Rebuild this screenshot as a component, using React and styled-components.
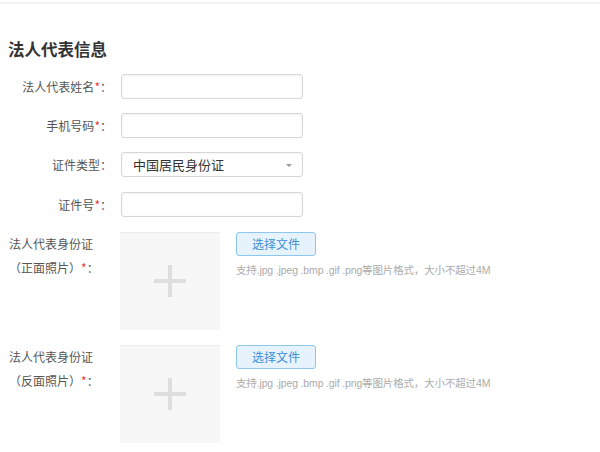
import React from "react";
import styled, { createGlobalStyle } from "styled-components";

const Global = createGlobalStyle`
  html, body { margin: 0; padding: 0; background: #fff; }
  body { font-family: "Microsoft YaHei", "Noto Sans CJK SC", "Liberation Sans", sans-serif; }
  * { box-sizing: border-box; }
`;

const Page = styled.div`
  width: 600px;
  height: 452px;
  overflow: hidden;
  background: #fff;
`;

const TopRule = styled.div`
  margin-top: 2px;
  height: 2px;
  background: #f1f1f1;
`;

const Body = styled.div`
  padding: 0 0 0 9px;
`;

const Title = styled.h2`
  margin: 34px 0 0 -1px;
  font-size: 16.5px;
  line-height: 22px;
  font-weight: bold;
  color: #333;
`;

const Fields = styled.div`
  display: flex;
  flex-direction: column;
  gap: 14.2px;
  margin-top: 14px;
`;

const Row = styled.div`
  display: flex;
  align-items: center;
  height: 25px;
`;

const Label = styled.label`
  width: 103px;
  flex: none;
  text-align: right;
  font-size: 12px;
  color: #555;
  white-space: nowrap;
  margin-right: 9px;
`;

const Star = styled.span`
  color: #e4393c;
`;

const Input = styled.input`
  width: 182px;
  height: 25px;
  border: 1px solid #d6d6d6;
  border-radius: 3px;
  box-shadow: inset 0 1px 3px rgba(0, 0, 0, 0.06);
  background: #fff;
  outline: none;
  padding: 0 10px;
`;

const Select = styled.div`
  position: relative;
  width: 182px;
  height: 25px;
  border: 1px solid #d6d6d6;
  border-radius: 3px;
  box-shadow: inset 0 1px 2px rgba(0, 0, 0, 0.04);
  display: flex;
  align-items: center;
  padding-left: 11px;
  font-size: 13px;
  color: #333;
`;

const Caret = styled.span`
  position: absolute;
  right: 10px;
  top: 11px;
  width: 0;
  height: 0;
  border-left: 3px solid transparent;
  border-right: 3px solid transparent;
  border-top: 3px solid #9a9a9a;
`;

const Uploads = styled.div`
  display: flex;
  flex-direction: column;
  gap: 15px;
  margin-top: 15px;
`;

const UploadRow = styled.div`
  display: flex;
  align-items: flex-start;
`;

const UploadLabel = styled.div`
  width: 111px;
  flex: none;
  font-size: 12px;
  line-height: 24px;
  color: #555;
  white-space: nowrap;
`;

const PhotoBox = styled.div`
  width: 100px;
  height: 98px;
  flex: none;
  background: #f7f7f7;
  border-top: 1px solid #ececec;
  display: flex;
  align-items: center;
  justify-content: center;
`;

const Side = styled.div`
  margin-left: 16px;
  display: flex;
  flex-direction: column;
  align-items: flex-start;
`;

const PickButton = styled.button`
  width: 80px;
  height: 24px;
  border: 1px solid #8ec7ee;
  border-radius: 3px;
  background: #e6f3fd;
  color: #3d8fd8;
  font-family: inherit;
  font-size: 12px;
  padding: 0;
  cursor: pointer;
`;

const Hint = styled.div`
  margin-top: 6px;
  font-family: "Liberation Sans", "Noto Sans CJK SC", sans-serif;
  font-size: 10.5px;
  letter-spacing: -0.15px;
  line-height: 16px;
  color: #ababab;
  white-space: nowrap;
`;

const Plus = () => (
  <svg width="32" height="32" viewBox="0 0 32 32">
    <rect x="14" y="0" width="4" height="32" fill="#dedede" />
    <rect x="0" y="14" width="32" height="4" fill="#dedede" />
  </svg>
);

const fields = [
  { label: "法人代表姓名", required: true },
  { label: "手机号码", required: true },
  { label: "证件类型", required: false, select: "中国居民身份证" },
  { label: "证件号", required: true },
];

const uploads = ["（正面照片）", "（反面照片）"];

export default function App() {
  return (
    <Page>
      <Global />
      <TopRule />
      <Body>
        <Title>法人代表信息</Title>
        <Fields>
          {fields.map((f) => (
            <Row key={f.label}>
              <Label>
                {f.label}
                {f.required && <Star>*</Star>}：
              </Label>
              {f.select ? (
                <Select>
                  {f.select}
                  <Caret />
                </Select>
              ) : (
                <Input type="text" />
              )}
            </Row>
          ))}
        </Fields>
        <Uploads>
          {uploads.map((u) => (
            <UploadRow key={u}>
              <UploadLabel>
                法人代表身份证
                <br />
                {u}
                <Star>*</Star>：
              </UploadLabel>
              <PhotoBox>
                <Plus />
              </PhotoBox>
              <Side>
                <PickButton>选择文件</PickButton>
                <Hint>支持.jpg .jpeg .bmp .gif .png等图片格式，大小不超过4M</Hint>
              </Side>
            </UploadRow>
          ))}
        </Uploads>
      </Body>
    </Page>
  );
}
